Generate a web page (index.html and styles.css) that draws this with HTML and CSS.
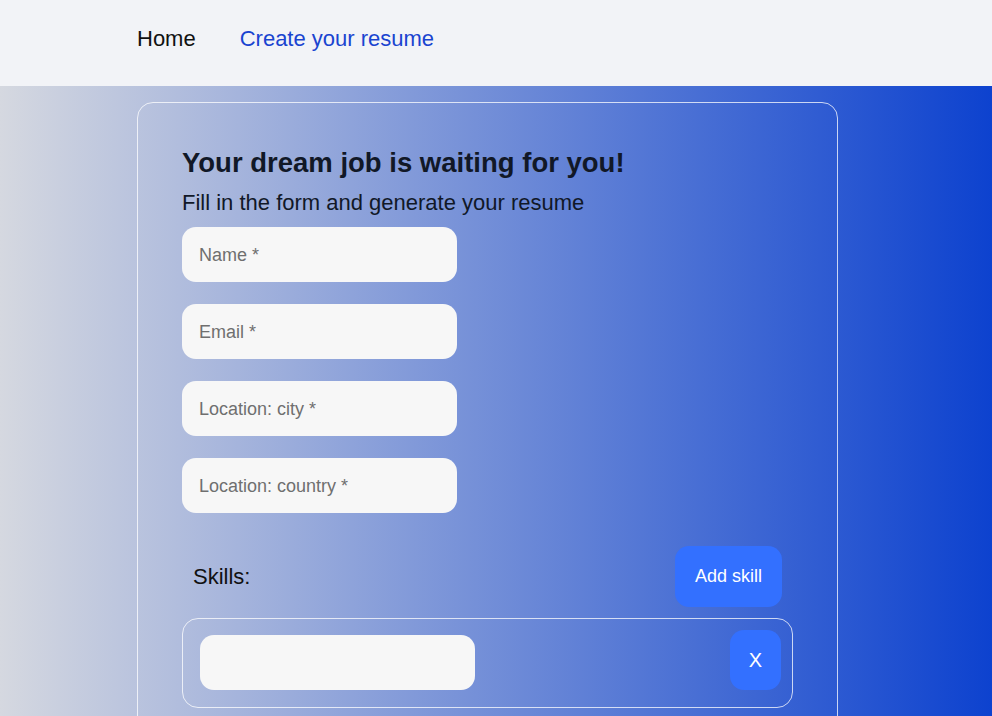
FILE: index.html
```html
<!DOCTYPE html>
<html lang="en">
<head>
<meta charset="utf-8">
<title>Create your resume</title>
<link rel="stylesheet" href="styles.css">
</head>
<body>
<header class="topbar">
  <nav class="nav">
    <a class="nav-link" href="#">Home</a>
    <a class="nav-link active" href="#">Create your resume</a>
  </nav>
</header>
<main class="page">
  <section class="card">
    <h1 class="title">Your dream job is waiting for you!</h1>
    <p class="subtitle">Fill in the form and generate your resume</p>
    <form class="form">
      <input class="field" type="text" placeholder="Name *">
      <input class="field" type="text" placeholder="Email *">
      <input class="field" type="text" placeholder="Location: city *">
      <input class="field" type="text" placeholder="Location: country *">
      <div class="skills-head">
        <span class="skills-label">Skills:</span>
        <button type="button" class="btn add-btn">Add skill</button>
      </div>
      <div class="skill-item">
        <input class="field" type="text">
        <button type="button" class="btn remove-btn">X</button>
      </div>
    </form>
  </section>
</main>
</body>
</html>
```
FILE: styles.css
```css
* { box-sizing: border-box; }
html, body { margin: 0; padding: 0; }
body {
  font-family: "Liberation Sans", Arial, sans-serif;
  color: #111827;
  min-height: 716px;
  background: linear-gradient(to right, #d5d8e0 0%, #0d42cf 100%);
}
.topbar {
  background: #f2f3f7;
  height: 86px;
  padding-left: 137px;
  display: flex;
  align-items: center;
}
.nav { display: flex; gap: 44px; margin-top: -8px; }
.nav-link {
  font-size: 22px;
  color: #111;
  text-decoration: none;
}
.nav-link.active { color: #1a44d0; }
.page {
  padding: 16px 0 0 137px;
}
.card {
  width: 701px;
  border: 1px solid rgba(255,255,255,0.75);
  border-radius: 16px;
  padding: 42px 44px 40px 44px;
  min-height: 700px;
}
.title {
  margin: 0;
  font-size: 27.5px;
  font-weight: bold;
  color: #111827;
  line-height: 36px;
}
.subtitle {
  margin: 8px 0 0;
  font-size: 22px;
  line-height: 28px;
  color: #111827;
}
.form {
  margin-top: 10px;
  display: flex;
  flex-direction: column;
  align-items: flex-start;
  gap: 22px;
}
.field {
  width: 275px;
  height: 55px;
  border: none;
  border-radius: 14px;
  background: #f7f7f7;
  padding: 2px 17px 0;
  font-family: "Liberation Sans", Arial, sans-serif;
  font-size: 18px;
  color: #333;
  outline: none;
}
.field::placeholder { color: #6f6f6f; }
.skills-head {
  width: 611px;
  margin-top: 11px;
  padding: 0 11px;
  display: flex;
  justify-content: space-between;
  align-items: center;
}
.skills-label { font-size: 22px; color: #111; }
.btn {
  border: none;
  background: #3370ff;
  color: #fff;
  font-family: "Liberation Sans", Arial, sans-serif;
  font-size: 18px;
  border-radius: 14px;
  cursor: pointer;
}
.add-btn { width: 107px; height: 61px; }
.skill-item {
  width: 611px;
  height: 90px;
  margin-top: -11px;
  border: 1px solid rgba(255,255,255,0.75);
  border-radius: 16px;
  padding: 0 11px 17px 17px;
  display: flex;
  justify-content: space-between;
  align-items: flex-end;
}
.remove-btn { width: 51px; height: 60px; font-size: 20px; }
```
